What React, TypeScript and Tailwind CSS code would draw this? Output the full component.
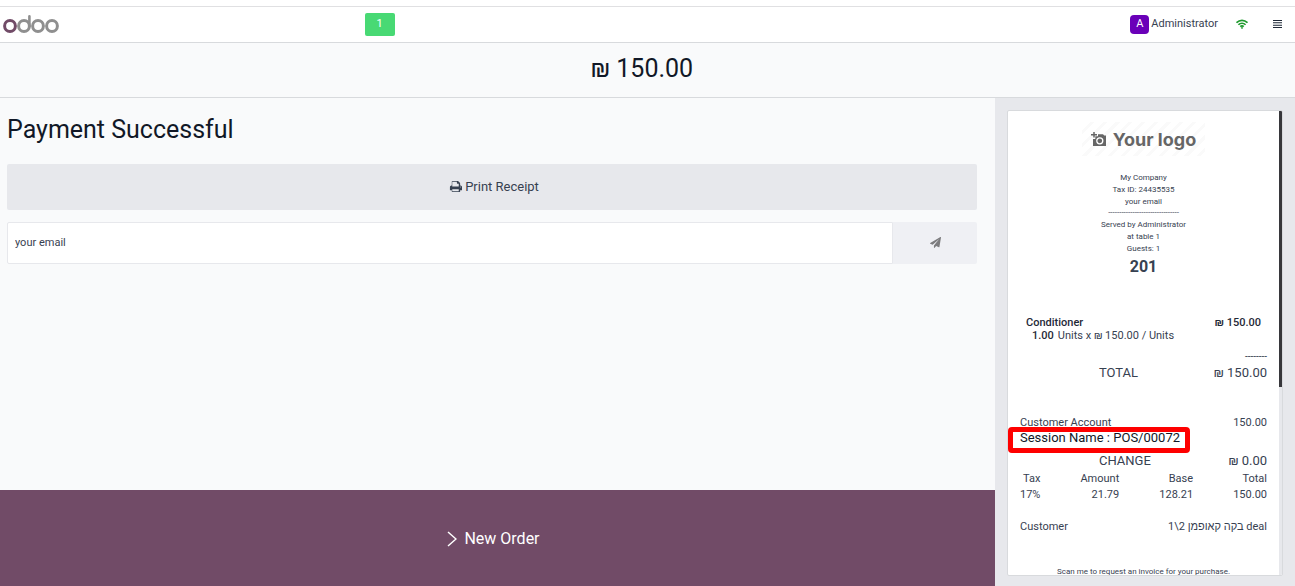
import type { ReactNode } from 'react';

function OdooLogo() {
  return (
    <svg className="mb-0.5 h-5 w-14" viewBox="0 0 56 20" fill="none" strokeWidth="3" role="img" aria-label="Odoo">
      <circle cx="7" cy="12" r="5.4" stroke="#714b67" />
      <g stroke="#8f8f8f">
        <circle cx="21" cy="12" r="5.4" />
        <path d="M26.4 12.4V2.4" strokeLinecap="round" strokeWidth="2.6" />
        <circle cx="35" cy="12" r="5.4" />
        <circle cx="49" cy="12" r="5.4" />
      </g>
    </svg>
  );
}

function WifiIcon() {
  return (
    <svg className="mb-0.5 h-2.5 w-3" viewBox="0 0 24 20" fill="none" stroke="#1e9a2d" strokeWidth="3.4" aria-hidden="true">
      <path d="M1 7.500C7.500 1.200 16.500 1.200 23 7.500" />
      <path d="M4.800 11.500C9 7.500 15 7.500 19.200 11.500" />
      <path d="M8.500 15.200C10.700 13.200 13.300 13.200 15.500 15.200" />
      <path d="M12 15.500l2.300 2.300L12 20l-2.300-2.200z" fill="#1e9a2d" stroke="none" />
    </svg>
  );
}

function MenuIcon() {
  return (
    <svg className="mb-0.5 h-2 w-[9px]" viewBox="0 0 9 8" fill="#1f2937" aria-hidden="true">
      <path d="M0 0h9v1H0zM0 2.300h9v1H0zM0 4.700h9v1H0zM0 7h9v1H0z" />
    </svg>
  );
}

function PrintIcon() {
  return (
    <svg className="mb-0.5 size-[13px]" viewBox="0 0 1792 1792" fill="currentColor" aria-hidden="true">
      <path d="M448 1536h896v-256h-896v256zM448 896h896v-384h-160q-40 0-68-28t-28-68v-160h-640v640zM1664 960q0-26-19-45t-45-19-45 19-19 45 19 45 45 19 45-19 19-45zM1792 960v416q0 13-9.500 22.500t-22.500 9.500h-224v160q0 40-28 68t-68 28h-960q-40 0-68-28t-28-68v-160h-224q-13 0-22.500-9.500t-9.500-22.500v-416q0-79 56.500-135.500t135.500-56.500h64v-544q0-40 28-68t68-28h672q40 0 88 20t76 48l152 152q28 28 48 76t20 88v256h64q79 0 135.500 56.500t56.500 135.500z" />
    </svg>
  );
}

function PlaneIcon() {
  return (
    <svg className="size-[11px]" viewBox="0 0 1792 1792" fill="#7c7c7e" aria-hidden="true">
      <path d="M1764 11q33 24 27 64l-256 1536q-5 29-32 45-14 8-31 8-11 0-24-5l-453-185-242 295q-18 23-49 23-13 0-22-4-19-7-30.500-23.500t-11.500-36.500v-349l864-1059-1069 925-395-162q-37-14-40-55-2-40 32-59l1664-960q15-9 32-9 20 0 36 11z" />
    </svg>
  );
}

function CameraIcon() {
  return (
    <svg className="mb-0.5 h-[15px] w-4" viewBox="0 0 16 15" aria-hidden="true">
      <path d="M3 0v5.500M0 2.800h6" stroke="#666" strokeWidth="1.500" />
      <path d="M7 2.200h5l1.200 1.300H15v10.500H2V7h2.300V4.300H7z" fill="#666" />
      <circle cx="8.800" cy="8.800" r="3" fill="none" stroke="#fff" strokeWidth="1.300" />
    </svg>
  );
}

function TotalLine({ label, children }: { label: string; children: ReactNode }) {
  return (
    <div className="flex justify-between text-[13px] leading-5">
      <span className="pl-[79px]">{label}</span>
      <span>{children}</span>
    </div>
  );
}

function Receipt() {
  return (
    <div className="flex min-h-0 flex-1 overflow-hidden rounded-xs border border-[#d8dadd] bg-white">
      <div className="min-w-0 flex-1 overflow-hidden px-3 pt-[11px] text-[11px] text-[#374151]">
        <div className="mx-auto flex h-[34px] w-[123px] items-center justify-center gap-1.5 bg-[repeating-linear-gradient(135deg,#fff_0px,#fff_6px,#fafafa_6px,#fafafa_9px)] pt-0.5 font-['Inter'] text-lg font-bold whitespace-nowrap text-[#666]">
          <CameraIcon />
          <span>Your logo</span>
        </div>
        <div className="mt-4 text-center text-[8px] leading-3">
          <p>My Company</p>
          <p>Tax ID: 24435535</p>
          <p>your email</p>
          <p className="h-[11px] leading-[10px]">--------------------------------</p>
          <p>Served by Administrator</p>
          <p>at table 1</p>
          <p>Guests: 1</p>
          <p className="text-base leading-6 font-bold">201</p>
        </div>

        <div className="mt-[37px] px-1.5 leading-[13px]">
          <div className="flex justify-between font-medium text-[#1f2937]">
            <span>Conditioner</span>
            <span>₪ 150.00</span>
          </div>
          <p className="pl-1.5">
            <strong className="mr-1 font-medium text-[#1f2937]">1.00</strong>Units x ₪ 150.00 / Units
          </p>
        </div>
        <p className="mt-2 text-right text-[10px] leading-[13px]">--------</p>
        <TotalLine label="TOTAL">₪ 150.00</TotalLine>

        <div className="mt-8 flex justify-between leading-4">
          <span>Customer Account</span>
          <span>150.00</span>
        </div>
        <p className="relative text-[13px] leading-[14px] text-[#111827]">
          Session Name : POS/00072
          <span className="absolute -top-1 -left-3 h-[26px] w-[182px] rounded-sm border-5 border-[#fe0000]" />
        </p>
        <div className="mt-1.5">
          <TotalLine label="CHANGE">₪ 0.00</TotalLine>
        </div>
        <table className="w-full text-right leading-4">
          <thead>
            <tr>
              <th className="w-[8%] font-normal">Tax</th>
              <th className="w-[32%] font-normal">Amount</th>
              <th className="w-[30%] font-normal">Base</th>
              <th className="w-[30%] font-normal">Total</th>
            </tr>
          </thead>
          <tbody>
            <tr>
              <td>17%</td>
              <td>21.79</td>
              <td>128.21</td>
              <td>150.00</td>
            </tr>
          </tbody>
        </table>
        <div className="mt-4 flex justify-between leading-4">
          <span>Customer</span>
          <span dir="rtl">deal בקה קאופמן 2\1</span>
        </div>
        <p className="mt-[31px] text-center text-[8px] leading-3 whitespace-nowrap">
          Scan me to request an invoice for your purchase.
        </p>
      </div>
      <div className="w-[3px] shrink-0 bg-[#e7e8ec]">
        <div className="h-[59.500%] bg-[#37373b]" />
      </div>
    </div>
  );
}

export default function App() {
  return (
    <div className="flex h-screen flex-col bg-[#f9fafb] font-['Roboto','Liberation_Sans',sans-serif] text-[#374151]">
      <header className="shrink-0 border-b border-[#d8dadd] bg-white pt-1.5">
        <div className="flex h-9 items-center border-t border-[#e0e0e2] pr-[7px]">
          <div className="flex w-[28.300%] pl-[3px]">
            <OdooLogo />
          </div>
          <button className="h-[23px] w-[30px] rounded-xs bg-[#48d974] text-[11px] text-white">1</button>
          <div className="ml-auto flex items-center gap-[18px]">
            <div className="flex items-center gap-0.5 text-[11px]">
              <span className="flex size-[19px] items-center justify-center rounded-sm bg-[#6a00b8] text-white">A</span>
              <span>Administrator</span>
            </div>
            <WifiIcon />
            <button aria-label="Menu" className="flex h-5 w-[22px] items-center justify-center">
              <MenuIcon />
            </button>
          </div>
        </div>
      </header>

      <div className="flex h-[55px] shrink-0 items-center justify-center border-b border-[#d8dadd] pr-[11px] pb-0.5 text-[25px] text-[#111827]">
        ₪ 150.00
      </div>

      <div className="flex min-h-0 flex-1">
        <main className="flex min-w-0 flex-1 flex-col">
          <div className="flex-1 pt-3.5 pr-[18px] pl-[7px]">
            <h1 className="text-[25px] leading-9 text-[#111827]">Payment Successful</h1>
            <button className="mt-4 flex h-[46px] w-full items-center justify-center gap-[3px] rounded-xs bg-[#e7e8ec] pl-1 text-[13px]">
              <PrintIcon />
              Print Receipt
            </button>
            <form className="mt-3 flex h-[42px]">
              <input
                type="text"
                aria-label="Email"
                defaultValue="your email"
                className="min-w-0 flex-1 rounded-l-xs border border-[#e7e8ec] bg-white px-[7px] text-[11px] outline-none"
              />
              <button
                type="button"
                aria-label="Send receipt"
                className="flex w-[84px] items-center justify-center rounded-r-xs bg-[#eff0f4] pb-0.5"
              >
                <PlaneIcon />
              </button>
            </form>
          </div>
          <button className="flex h-24 items-center justify-center gap-[7px] bg-[#714b67] pt-0.5 pr-2 text-base text-white">
            <svg className="h-4 w-2.5" viewBox="0 0 10 16" fill="none" stroke="currentColor" strokeWidth="1.500" aria-hidden="true">
              <path d="M1 1l8 7-8 7" />
            </svg>
            New Order
          </button>
        </main>
        <aside className="flex w-[300px] shrink-0 flex-col bg-[#e7e8ec] pt-3 pr-3 pb-2.5 pl-3">
          <Receipt />
        </aside>
      </div>
    </div>
  );
}
